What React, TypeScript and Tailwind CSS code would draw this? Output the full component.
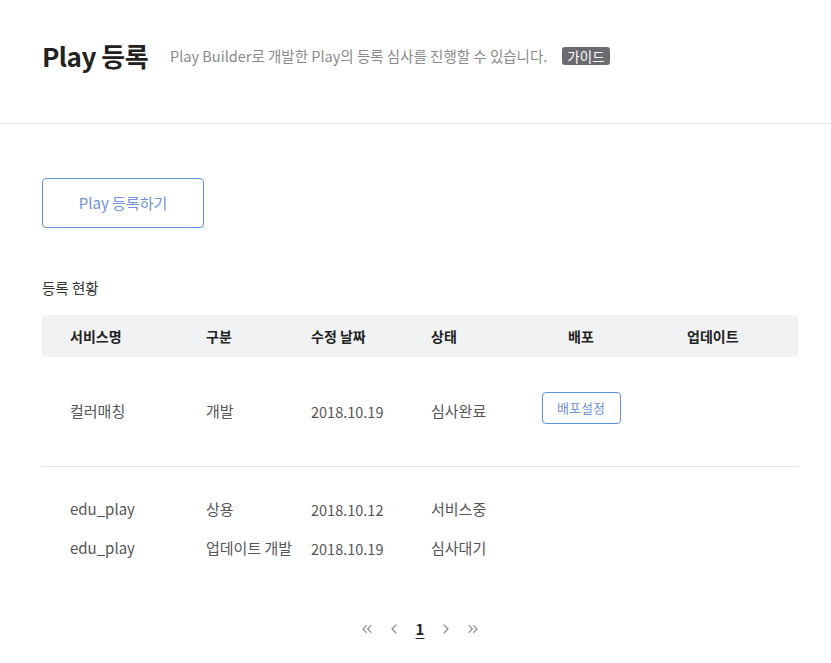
import React from "react";
import { ChevronsLeft, ChevronLeft, ChevronRight, ChevronsRight } from "lucide-react";

interface Row {
  name: string;
  type: string;
  date: string;
  status: string;
}

const rows: Row[] = [
  { name: "edu_play", type: "상용", date: "2018.10.12", status: "서비스중" },
  { name: "edu_play", type: "업데이트 개발", date: "2018.10.19", status: "심사대기" },
];

const cols = "grid grid-cols-[136px_105px_120px_90px_120px_1fr] pl-7";

export default function App() {
  return (
    <div className="min-h-[663px] bg-white text-[#222] font-['Noto_Sans_CJK_KR','Noto_Sans',sans-serif]">
      {/* Header */}
      <div className="h-[124px] border-b border-[#e4e4e4] px-[42px] pt-[36px]">
        <div className="flex items-center">
          <h1 className="text-[26px] font-bold leading-[40px] tracking-[-0.5px]">Play 등록</h1>
          <p className="ml-[22px] text-[14.5px] text-[#8a8a8a]">
            Play Builder로 개발한 Play의 등록 심사를 진행할 수 있습니다.
          </p>
          <span className="ml-[15px] rounded-[3px] bg-[#696b70] px-[5px] text-[13.5px] leading-[18px] text-white">
            가이드
          </span>
        </div>
      </div>

      <div className="px-[42px] pt-[54px]">
        <button className="h-[50px] w-[162px] rounded-[4px] border border-[#5b93e0] text-[15px] text-[#6f92dc]">
          Play 등록하기
        </button>

        <h2 className="mt-[50px] text-[14.5px] leading-[20px] text-[#333]">등록 현황</h2>

        <div className="mt-[17px] w-[756px]">
          {/* table header */}
          <div className={`${cols} h-[42px] items-center bg-[#f1f2f4] text-[14px] font-bold text-[#222]`}>
            <span>서비스명</span>
            <span>구분</span>
            <span>수정 날짜</span>
            <span>상태</span>
            <span className="text-center">배포</span>
            <span className="pl-[46px] text-left">업데이트</span>
          </div>

          {/* first row */}
          <div className={`${cols} h-[110px] items-center border-b border-[#e2e2e2] text-[15px] text-[#555]`}>
            <span>컬러매칭</span>
            <span>개발</span>
            <span className="text-[14.5px]">2018.10.19</span>
            <span>심사완료</span>
            <span className="flex justify-center">
              <button className="mb-[7px] h-[32px] w-[79px] rounded-[4px] border border-[#5b93e0] text-[13px] text-[#6f92dc]">
                배포설정
              </button>
            </span>
            <span />
          </div>

          <div className="pt-[23px]">
            {rows.map((r, i) => (
              <div key={i} className={`${cols} h-[39px] items-center text-[15px] text-[#555]`}>
                <span>{r.name}</span>
                <span>{r.type}</span>
                <span className="text-[14.5px]">{r.date}</span>
                <span>{r.status}</span>
                <span />
                <span />
              </div>
            ))}
          </div>
        </div>

        {/* pagination */}
        <div className="mt-[50px] flex items-center justify-center gap-[11px] pl-[9px] text-[#8c8c8c]">
          <ChevronsLeft size={16} strokeWidth={1.8} />
          <ChevronLeft size={16} strokeWidth={1.8} />
          <span className="px-[3px] text-[15px] font-bold text-[#222] underline underline-offset-[3px]">1</span>
          <ChevronRight size={16} strokeWidth={1.8} />
          <ChevronsRight size={16} strokeWidth={1.8} />
        </div>
      </div>
    </div>
  );
}
